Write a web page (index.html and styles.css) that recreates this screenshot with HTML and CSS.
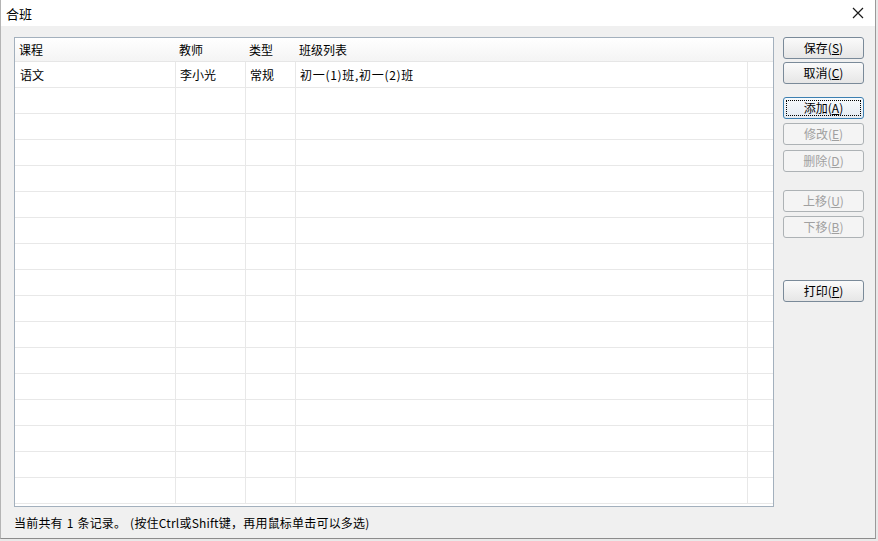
FILE: index.html
```html
<!DOCTYPE html>
<html lang="zh-CN">
<head>
  <meta charset="UTF-8">
  <title>合班</title>
  <link rel="stylesheet" href="styles.css">
</head>
<body>
  <div class="window">
    <div class="titlebar">
      <span class="title">合班</span>
      <span class="close">
        <svg width="12" height="12" viewBox="0 0 12 12"><path d="M1 1L11 11M11 1L1 11" stroke="#1a1a1a" stroke-width="1.2" fill="none"/></svg>
      </span>
    </div>

    <div class="content">
      <div class="grid">
        <div class="grid-head">
          <div class="c1">课程</div>
          <div class="c2">教师</div>
          <div class="c3">类型</div>
          <div class="c4">班级列表</div>
          <div class="c5"></div>
        </div>
        <div class="grid-body" id="rows">
          <div class="row">
            <div class="c1">语文</div>
            <div class="c2">李小光</div>
            <div class="c3">常规</div>
            <div class="c4 classes">初一(1)班,初一(2)班</div>
            <div class="c5"></div>
          </div>
        </div>
      </div>

      <div class="buttons">
        <button class="btn">保存(<u>S</u>)</button>
        <button class="btn gap-3">取消(<u>C</u>)</button>
        <button class="btn focus gap-13">添加(<u>A</u>)</button>
        <button class="btn gap-4" disabled>修改(<u>E</u>)</button>
        <button class="btn gap-5" disabled>删除(<u>D</u>)</button>
        <button class="btn gap-18" disabled>上移(<u>U</u>)</button>
        <button class="btn gap-4" disabled>下移(<u>B</u>)</button>
        <button class="btn gap-42">打印(<u>P</u>)</button>
      </div>
    </div>

    <div class="status">当前共有 1 条记录。 (按住Ctrl或Shift键，再用鼠标单击可以多选)</div>
  </div>

  <script>
    // fill the empty rows below the data
    const rows = document.getElementById('rows');
    for (let i = 0; i < 16; i++) {
      const r = document.createElement('div');
      r.className = 'row';
      r.innerHTML = '<div class="c1"></div><div class="c2"></div><div class="c3"></div><div class="c4"></div><div class="c5"></div>';
      rows.appendChild(r);
    }
  </script>
</body>
</html>
```

FILE: styles.css
```css
* { box-sizing: border-box; }
body { margin: 0; background: #e9e9e9; font-family: "Noto Sans CJK SC", "Microsoft YaHei", sans-serif; font-size: 12px; color: #000; }

.window { width: 876px; height: 539px; background: #f0f0f0; border-left: 1px solid #b4b4b4; border-right: 1px solid #9a9a9a; border-bottom: 1px solid #8c8c8c; display: flex; flex-direction: column; }

.titlebar { height: 26px; background: #fff; display: flex; align-items: center; justify-content: space-between; padding: 0 11px 0 5px; }
.title { font-size: 13px; }
.close { display: flex; align-items: center; }

.content { display: flex; padding: 11px 11px 0 13px; gap: 9px; }

.grid { width: 760px; height: 470px; border: 1px solid #a3b0bd; background: #fff; overflow: hidden; }
.grid-head, .row { display: flex; }
.grid-head { height: 24px; align-items: center; background: linear-gradient(#fff, #f4f4f4); border-bottom: 1px solid #e6e6e6; }
.grid-head > div { padding-left: 4px; }
.grid-head .c2, .grid-head .c3, .grid-head .c4 { padding-left: 3px; }

.row { height: 26px; border-bottom: 1px solid #e8e8e8; }
.row > div { display: flex; align-items: center; padding-left: 5px; border-right: 1px solid #e8e8e8; }
.row .c2, .row .c3, .row .c4 { padding-left: 4px; }
.row .c5 { border-right: none; }

.c1 { width: 161px; }
.c2 { width: 70px; }
.c3 { width: 50px; }
.c4 { width: 452px; }
.c5 { flex: 1; }
.classes { letter-spacing: 0.7px; }

.buttons { display: flex; flex-direction: column; width: 81px; }
.btn { height: 22px; width: 81px; padding: 0 0 1px; font: inherit; color: #000; border: 1px solid #7a8a99; border-radius: 3px; background: linear-gradient(#fafafa 0%, #f0f0f0 50%, #e6e6e6 100%); }
.btn u { text-underline-offset: 1px; }
.btn:disabled { color: #a0a0a0; border-color: #adb2b5; background: #f4f4f4; }
.btn.focus { border-color: #3c7fb1; background: linear-gradient(#f6fafd 0%, #eef3f8 50%, #e4ebf2 100%); outline: 1px dotted #000; outline-offset: -4px; }

.gap-3 { margin-top: 3px; }
.gap-4 { margin-top: 4px; }
.gap-5 { margin-top: 5px; }
.gap-13 { margin-top: 13px; }
.gap-18 { margin-top: 18px; }
.gap-42 { margin-top: 42px; }

.status { padding: 7px 0 0 13px; letter-spacing: 0.2px; word-spacing: 1px; }
```
